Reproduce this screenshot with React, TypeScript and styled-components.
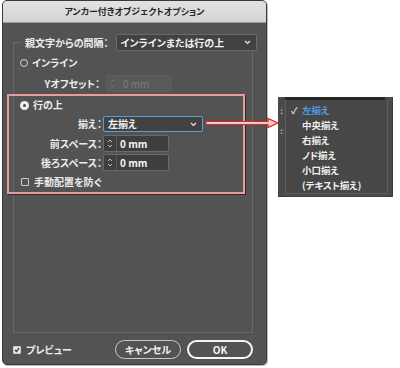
import React, { ReactElement } from 'react';
import styled, { createGlobalStyle, css } from 'styled-components';

const GlobalStyle = createGlobalStyle`
  html, body {
    margin: 0;
    padding: 0;
    background: #ffffff;
  }
  body {
    font-family: "Noto Sans CJK JP", "Noto Sans", sans-serif;
    font-feature-settings: "palt";
  }
`;

const Canvas = styled.div`
  position: relative;
  width: 400px;
  height: 368px;
  overflow: hidden;
  background: #ffffff;
`;

const Dialog = styled.div`
  box-sizing: border-box;
  margin-left: 2px;
  width: 265px;
  height: 365px;
  display: flex;
  flex-direction: column;
  background: #535353;
  border: 1px solid #3a3a3a;
  border-radius: 5px;
  overflow: hidden;
  box-shadow: 1px 1px 0 #b8b8b8;
`;

const TitleBar = styled.div`
  height: 21px;
  flex: none;
  display: flex;
  align-items: center;
  justify-content: center;
  background: linear-gradient(#e2e2e2, #d4d4d4);
  border-bottom: 1px solid #9c9c9c;
  color: #262626;
  font-size: 9px;
  font-weight: 700;
`;

const DialogBody = styled.div`
  flex: 1;
  display: flex;
  flex-direction: column;
  padding: 11px 13px 0 10px;
`;

const Group = styled.fieldset`
  box-sizing: border-box;
  margin: 0;
  padding: 0;
  width: 240px;
  height: 299px;
  border: 1px solid #686868;
  min-width: 0;
`;

const GroupLegend = styled.legend`
  display: flex;
  align-items: center;
  gap: 7px;
  margin-left: 8px;
  padding: 0 0 0 3px;
`;

const Label = styled.span<{ $width?: number }>`
  color: #ececec;
  font-size: 10px;
  font-weight: 700;
  line-height: 1;
  white-space: nowrap;
  ${(p) =>
    p.$width !== undefined &&
    css`
      width: ${p.$width}px;
      text-align: right;
    `}
`;

const SelectBox = styled.div<{ $width: number; $focused?: boolean }>`
  box-sizing: border-box;
  width: ${(p) => p.$width}px;
  height: ${(p) => (p.$focused ? 16 : 17)}px;
  display: flex;
  align-items: center;
  justify-content: space-between;
  padding: 0 5px 0 4px;
  background: #424242;
  border: 1px solid ${(p) => (p.$focused ? '#5b9bd8' : '#696969')};
  border-radius: 2px;
  color: #f2f2f2;
  font-size: 10px;
  font-weight: 700;
  line-height: 1;
`;

const RadioRow = styled.div<{ $indent: number; $top: number }>`
  display: flex;
  align-items: center;
  gap: 4px;
  height: 14px;
  margin: ${(p) => p.$top}px 0 0 ${(p) => p.$indent}px;
`;

const RadioDot = styled.span<{ $checked?: boolean }>`
  box-sizing: border-box;
  width: 8px;
  height: 8px;
  border-radius: 50%;
  border: 1px solid #d6d6d6;
  ${(p) =>
    p.$checked &&
    css`
      width: 9px;
      height: 9px;
      background: #f0f0f0;
      border: none;
      display: flex;
      align-items: center;
      justify-content: center;
      &::after {
        content: '';
        width: 3px;
        height: 3px;
        border-radius: 50%;
        background: #4a4a4a;
      }
    `}
`;

const FieldRow = styled.div<{ $top: number; $gap: number }>`
  display: flex;
  align-items: center;
  gap: ${(p) => p.$gap}px;
  margin-top: ${(p) => p.$top}px;
`;

const NumberBox = styled.div<{ $disabled?: boolean }>`
  box-sizing: border-box;
  width: 66px;
  height: 17px;
  display: flex;
  align-items: center;
  background: ${(p) => (p.$disabled ? '#595959' : '#3e3e3e')};
  border: 1px solid ${(p) => (p.$disabled ? '#5d5d5d' : '#6a6a6a')};
  border-radius: 2px;
  color: ${(p) => (p.$disabled ? '#7c7c7c' : '#f4f4f4')};
  font-size: 10px;
  font-weight: ${(p) => (p.$disabled ? 400 : 700)};
  line-height: 1;
`;

const Spinner = styled.span<{ $disabled?: boolean }>`
  width: 12px;
  height: 100%;
  flex: none;
  display: flex;
  align-items: center;
  justify-content: center;
  border-right: 1px solid ${(p) => (p.$disabled ? '#5d5d5d' : '#5a5a5a')};
  margin-right: 3px;
`;

const Highlight = styled.div`
  box-sizing: border-box;
  width: 238px;
  height: 100px;
  margin: 2px 0 0 -7px;
  padding: 2px 0 0 0;
  border: 2px solid #e59c9c;
  box-shadow: 1px 1px 0 #2c2c2c;
`;

const CheckRow = styled.div<{ $indent: number; $top: number }>`
  display: flex;
  align-items: center;
  gap: 5px;
  height: 14px;
  margin: ${(p) => p.$top}px 0 0 ${(p) => p.$indent}px;
`;

const CheckSquare = styled.span<{ $checked?: boolean }>`
  box-sizing: border-box;
  width: 8px;
  height: 8px;
  flex: none;
  display: flex;
  align-items: center;
  justify-content: center;
  border: 1px solid #cfcfcf;
  border-radius: 1px;
  background: ${(p) => (p.$checked ? '#e4e4e4' : 'transparent')};
`;

const Footer = styled.div`
  display: flex;
  align-items: center;
  justify-content: space-between;
  margin-top: 7px;
  height: 19px;
`;

const Buttons = styled.div`
  display: flex;
  gap: 6px;
`;

const PillButton = styled.div<{ $primary?: boolean }>`
  box-sizing: border-box;
  width: 66px;
  height: 19px;
  display: flex;
  align-items: center;
  justify-content: center;
  border-radius: 10px;
  border: ${(p) => (p.$primary ? '2px solid #f4f4f4' : '1px solid #c8c8c8')};
  color: #f4f4f4;
  font-size: 10px;
  font-weight: 700;
  line-height: 1;
`;

const ArrowMark = styled.svg`
  position: absolute;
  left: 205px;
  top: 117px;
`;

const Popup = styled.div`
  position: absolute;
  left: 278px;
  top: 97px;
  box-sizing: border-box;
  width: 115px;
  height: 100px;
  display: flex;
  background: #4a4a4a;
  border-right: 1px solid #3c3c3c;
  border-bottom: 1px solid #3c3c3c;
`;

const PopupGutter = styled.div`
  width: 7px;
  flex: none;
  display: flex;
  flex-direction: column;
  align-items: center;
  padding-top: 10px;
  gap: 12px;
  color: #bdbdbd;
  font-size: 8px;
  font-weight: 700;
  line-height: 1;
`;

const PopupMain = styled.div`
  flex: 1;
  display: flex;
  flex-direction: column;
  padding-right: 4px;
`;

const PopupCap = styled.div`
  height: 4px;
  margin-right: 3px;
  background: #262626;
`;

const MenuList = styled.div`
  flex: 1;
  margin-bottom: 2px;
  padding-top: 3px;
  border: 1px solid #5e5e5e;
  border-top: none;
  background: #474747;
`;

const MenuItem = styled.div<{ $active?: boolean }>`
  height: 15px;
  display: flex;
  align-items: center;
  color: ${(p) => (p.$active ? '#4e9de6' : '#f0f0f0')};
  font-size: 9.5px;
  font-weight: 700;
  line-height: 1;
  white-space: nowrap;
`;

const CheckCell = styled.span`
  width: 16px;
  flex: none;
  padding-left: 5px;
  box-sizing: border-box;
  color: #d8d8d8;
  font-size: 9px;
`;

function Chevron(): ReactElement {
  return (
    <svg width="7" height="5" viewBox="0 0 7 5">
      <path d="M1 1 L3.5 3.5 L6 1" fill="none" stroke="#e8e8e8" strokeWidth="1.2" />
    </svg>
  );
}

function SpinIcon({ color }: { color: string }): ReactElement {
  return (
    <svg width="6" height="11" viewBox="0 0 6 11">
      <path d="M1 4 L3 2 L5 4 M1 7 L3 9 L5 7" fill="none" stroke={color} strokeWidth="0.9" />
    </svg>
  );
}

function NumberField({ disabled }: { disabled?: boolean }): ReactElement {
  return (
    <NumberBox $disabled={disabled}>
      <Spinner $disabled={disabled}>
        <SpinIcon color={disabled ? '#747474' : '#d0d0d0'} />
      </Spinner>
      0 mm
    </NumberBox>
  );
}

const menuItems = ['左揃え', '中央揃え', '右揃え', 'ノド揃え', '小口揃え', '(テキスト揃え)'];

export default function App(): ReactElement {
  return (
    <Canvas>
      <GlobalStyle />
      <Dialog>
        <TitleBar>アンカー付きオブジェクトオプション</TitleBar>
        <DialogBody>
          <Group>
            <GroupLegend>
              <Label>親文字からの間隔：</Label>
              <SelectBox $width={141}>
                インラインまたは行の上
                <Chevron />
              </SelectBox>
            </GroupLegend>
            <RadioRow $indent={6} $top={5}>
              <RadioDot />
              <Label>インライン</Label>
            </RadioRow>
            <FieldRow $top={5} $gap={6}>
              <Label $width={86}>Yオフセット：</Label>
              <NumberField disabled />
            </FieldRow>
            <Highlight>
              <RadioRow $indent={11} $top={0}>
                <RadioDot $checked />
                <Label>行の上</Label>
              </RadioRow>
              <FieldRow $top={4} $gap={1}>
                <Label $width={93}>揃え：</Label>
                <SelectBox $width={100} $focused>
                  左揃え
                  <Chevron />
                </SelectBox>
              </FieldRow>
              <FieldRow $top={3} $gap={1}>
                <Label $width={93}>前スペース：</Label>
                <NumberField />
              </FieldRow>
              <FieldRow $top={2} $gap={1}>
                <Label $width={93}>後ろスペース：</Label>
                <NumberField />
              </FieldRow>
              <CheckRow $indent={12} $top={4}>
                <CheckSquare />
                <Label>手動配置を防ぐ</Label>
              </CheckRow>
            </Highlight>
          </Group>
          <Footer>
            <CheckRow $indent={0} $top={0}>
              <CheckSquare $checked>
                <svg width="6" height="6" viewBox="0 0 6 6">
                  <path d="M1 3 L2.5 4.5 L5 1.2" fill="none" stroke="#3a3a3a" strokeWidth="1.3" />
                </svg>
              </CheckSquare>
              <Label>プレビュー</Label>
            </CheckRow>
            <Buttons>
              <PillButton>キャンセル</PillButton>
              <PillButton $primary>OK</PillButton>
            </Buttons>
          </Footer>
        </DialogBody>
      </Dialog>

      <ArrowMark width="76" height="12" viewBox="0 0 76 12">
        <path
          d="M1 4.5 H63 V1.5 L73 6 L63 10.5 V7.5 H1 Z"
          fill="#f3c9c9"
          stroke="#d42a2a"
          strokeWidth="1.2"
          strokeLinejoin="miter"
        />
      </ArrowMark>

      <Popup>
        <PopupGutter>
          <span>:</span>
          <span>:</span>
        </PopupGutter>
        <PopupMain>
          <PopupCap />
          <MenuList>
            {menuItems.map((item, i) => (
              <MenuItem key={item} $active={i === 0}>
                <CheckCell>{i === 0 ? '✓' : ''}</CheckCell>
                {item}
              </MenuItem>
            ))}
          </MenuList>
        </PopupMain>
      </Popup>
    </Canvas>
  );
}
